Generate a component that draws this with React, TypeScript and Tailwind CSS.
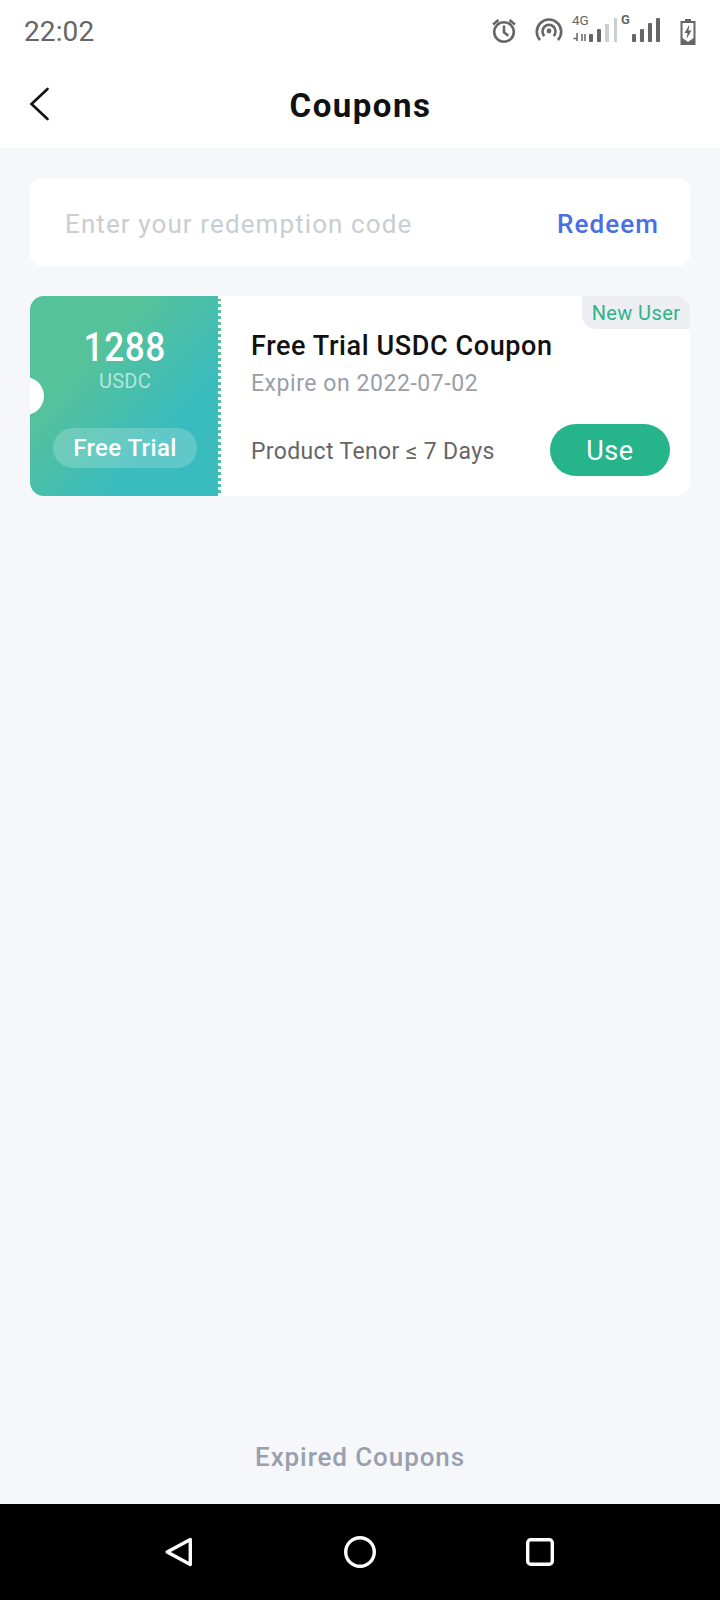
const StatusIcons = () => (
  <div className="flex items-center text-[#666666]">
    {/* alarm */}
    <svg className="w-[28px] h-[28px]" viewBox="0 2 28 28" fill="none" stroke="currentColor" strokeWidth={2.6}>
      <circle cx="14" cy="16" r="9.8" />
      <path d="M14 9.500v6.800l4.200 3.500" />
      <path d="M3 8.500l5.500-4.500M25 8.500l-5.500-4.500" />
    </svg>
    {/* hotspot */}
    <svg className="w-[28px] h-[28px] ml-[17px]" viewBox="0 1.500 28 28" fill="none" stroke="currentColor" strokeWidth={2.6}>
      <path d="M5 23.500a12.200 12.200 0 1 1 18 0" />
      <path d="M9.500 19.500a6.500 6.500 0 1 1 9 0" />
      <circle cx="14" cy="14.500" r="2.400" fill="currentColor" stroke="none" />
    </svg>
    {/* sim 1 */}
    <svg className="w-[46px] h-[44px] ml-[9px]" viewBox="0 -4 46 44" fill="currentColor">
      <text x="0" y="11" fontSize="13.500" fontFamily="Roboto, sans-serif">4G</text>
      <path d="M5 19v8M1.500 24.500H5M10 20v7M13 20v7" stroke="currentColor" strokeWidth="1.500" fill="none" />
      <rect x="17" y="20" width="4" height="8" rx="1" />
      <rect x="25" y="15" width="4" height="13" rx="1" />
      <rect x="33" y="10" width="4" height="18" fill="#c9d0cd" />
      <rect x="42" y="4" width="3" height="24" fill="#c9d0cd" />
    </svg>
    {/* sim 2 */}
    <svg className="w-[39px] h-[44px] ml-[3px]" viewBox="0 -4 39 44" fill="currentColor">
      <text x="0" y="10" fontSize="13" fontWeight="700" fontFamily="Roboto, sans-serif">G</text>
      <rect x="11" y="20" width="4" height="8" rx="1" />
      <rect x="19" y="15" width="4" height="13" rx="1" />
      <rect x="27" y="9" width="4" height="19" rx="1" />
      <rect x="35" y="4" width="4" height="24" rx="1" />
    </svg>
    {/* battery */}
    <svg className="w-[18px] h-[28px] ml-[19px]" viewBox="0 0 18 28" fill="currentColor">
      <path d="M6 1h6v2h4.500v24h-15V3H6z" />
      <path d="M3.500 5h11v15l-5.500 4-5.500-4z" fill="#ffffff" />
      <path d="M10.500 6.500L5.500 15h3l-1 6 5-8.500h-3z" />
    </svg>
  </div>
);

const App = () => {
  return (
    <div className="w-[720px] h-[1600px] flex flex-col bg-[#f5f7fb] font-['Roboto',sans-serif]">
      {/* Status bar + title */}
      <div className="bg-white h-[148px] shrink-0 flex flex-col">
        <div className="h-[64px] pl-[24px] pr-[23px] flex items-center justify-between">
          <span className="text-[28px] font-[450] text-[#666666] tracking-[0.1px]">22:02</span>
          <StatusIcons />
        </div>
        <div className="relative flex-1 flex items-center justify-center pl-[1px]">
          <svg className="absolute left-[28px] top-[21px] w-[24px] h-[36px]" viewBox="0 0 24 36" fill="none" stroke="#111111" strokeWidth={2.6}>
            <path d="M19.500 4L3.500 19l16 15" strokeLinecap="round" />
          </svg>
          <h1 className="text-[33px] font-bold text-[#111111] tracking-[1.5px]">Coupons</h1>
        </div>
      </div>

      <div className="flex-1 flex flex-col px-[30px] pt-[30px]">
        {/* Redeem */}
        <div className="h-[88px] bg-white rounded-[12px] pl-[35px] pr-[31px] flex items-center justify-between">
          <span className="mt-[4px] text-[26px] text-[#c9ced0] tracking-[1.1px]">Enter your redemption code</span>
          <span className="mt-[4px] text-[26px] font-medium text-[#4a6fe3] tracking-[1.1px]">Redeem</span>
        </div>

        {/* Coupon */}
        <div className="mt-[30px] h-[200px] bg-white rounded-[14px] flex relative">
          <div className="relative w-[191px] h-full shrink-0 pl-[2px] overflow-hidden rounded-l-[14px] bg-gradient-to-br from-[#55c299] from-30% to-[#3abbbd] to-70% border-r-[3px] border-dotted border-r-white flex flex-col items-center">
            <div className="absolute -left-[24px] top-[81px] w-[38px] h-[38px] bg-white rounded-full" />
            <span className="mt-[29px] text-[40px] leading-[46px] font-medium text-white tracking-[0.6px] scale-x-[0.88]">1288</span>
            <span className="-mt-[1px] text-[20px] leading-[22px] text-white/60 tracking-[0.2px]">USDC</span>
            <span className="mt-[36px] w-[144px] h-[40px] rounded-full bg-white/20 flex items-center justify-center text-[24px] font-medium text-white tracking-[0.4px]">Free Trial</span>
          </div>

          <div className="flex-1 flex flex-col pl-[30px] pr-[20px]">
            <span className="mt-[33px] text-[27px] leading-[34px] font-medium text-[#111111] tracking-[0.6px]">Free Trial USDC Coupon</span>
            <span className="mt-[6px] text-[23px] leading-[30px] text-[#9a9ea6] tracking-[0.55px]">Expire on 2022-07-02</span>
            <div className="mt-[25px] flex items-center justify-between">
              <span className="mt-[5px] text-[23px] text-[#666666] tracking-[0.35px]">Product Tenor ≤ 7 Days</span>
              <span className="w-[120px] h-[52px] pt-[2px] rounded-full bg-[#26b48a] flex items-center justify-center text-[27px] text-white tracking-[0.6px]">Use</span>
            </div>
          </div>

          <span className="absolute right-0 top-0 w-[108px] h-[33px] rounded-tr-[14px] rounded-bl-[14px] bg-[#eceef1] flex items-center justify-center text-[20px] text-[#2fb48c] tracking-[0.4px]">New User</span>
        </div>

        <div className="mt-auto h-[72px] flex items-start justify-center pt-[6px]">
          <span className="text-[26px] font-medium text-[#9a9fae] tracking-[0.9px]">Expired Coupons</span>
        </div>
      </div>

      {/* Android nav bar */}
      <div className="h-[96px] bg-black shrink-0 flex items-center pl-[165px]">
        <svg className="w-[27px] h-[30px]" viewBox="0 0 27 30" fill="#000000" stroke="#ffffff" strokeWidth={3.4} strokeLinejoin="round">
          <path d="M25.300 2.500L2.200 15l23.100 12.500z" />
        </svg>
        <svg className="w-[32px] h-[32px] ml-[152px]" viewBox="0 0 32 32" fill="none" stroke="#ffffff" strokeWidth={3.4}>
          <circle cx="16" cy="16" r="14.300" />
        </svg>
        <svg className="w-[28px] h-[28px] ml-[150px]" viewBox="0 0 28 28" fill="none" stroke="#ffffff" strokeWidth={3.4}>
          <rect x="1.700" y="1.700" width="24.600" height="24.600" rx="3" />
        </svg>
      </div>
    </div>
  );
};

export default App;
